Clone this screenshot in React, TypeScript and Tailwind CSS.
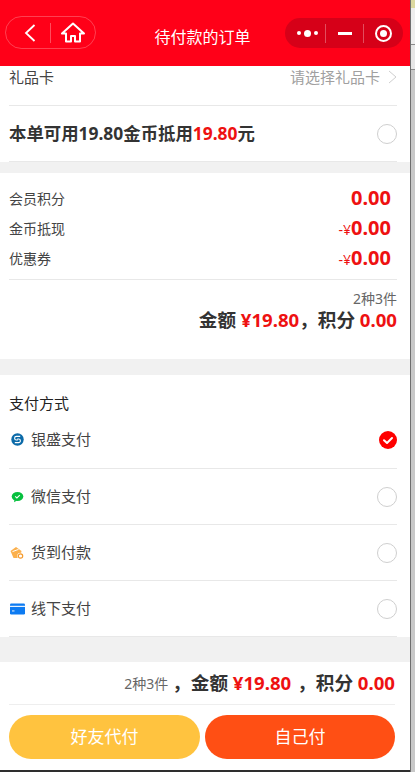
const font = "font-['Noto_Sans','Noto_Sans_CJK_SC',sans-serif]";

function Radio() {
  return <span className="h-5 w-5 shrink-0 rounded-full border border-[#cfcfcf] bg-white" />;
}

function Checked() {
  return (
    <svg width="18" height="18" viewBox="0 0 18 18" className="shrink-0">
      <circle cx="9" cy="9" r="9" fill="#ff0000" />
      <path d="M5 9.2l3 2.8 5-5" fill="none" stroke="#fff" strokeWidth="2" strokeLinecap="round" strokeLinejoin="round" />
    </svg>
  );
}

function UnionIcon() {
  return (
    <svg width="13" height="13" viewBox="0 0 13 13">
      <circle cx="6.5" cy="6.5" r="6.2" fill="#0b6aa8" />
      <path d="M9.2 3.4H5.4a1.8 1.8 0 0 0 0 3.6h1.4M3.8 9.6h3.8a1.8 1.8 0 0 0 0-3.6H6.2" fill="none" stroke="#fff" strokeWidth="1.1" />
    </svg>
  );
}

function WechatIcon() {
  return (
    <svg width="13" height="12" viewBox="0 0 13 12">
      <ellipse cx="6.5" cy="5.5" rx="5.8" ry="4.6" fill="#07c03f" />
      <path d="M3.5 9l-.5 2.2L6 9.6z" fill="#07c03f" />
      <path d="M4.2 5.4l1.7 1.5 2.9-2.7" fill="none" stroke="#fff" strokeWidth="1.1" />
    </svg>
  );
}

function CodIcon() {
  return (
    <svg width="14" height="14" viewBox="0 0 14 14">
      <path d="M0.5 5l5.5-4 5.5 4-1.5 7H3.5z" fill="#fbb04c" />
      <path d="M2.5 5.6l6-2.2" stroke="#fff" strokeWidth="1" />
      <circle cx="10.5" cy="10" r="3.2" fill="#fff" />
      <circle cx="10.5" cy="10" r="2.2" fill="none" stroke="#f59a2c" strokeWidth="1.2" />
    </svg>
  );
}

function CardIcon() {
  return (
    <svg width="15" height="12" viewBox="0 0 15 12">
      <rect width="15" height="11" y="0.5" rx="1.2" fill="#0d7bf2" />
      <rect y="2.8" width="15" height="1.1" fill="#fff" />
      <rect x="2" y="7.5" width="2.5" height="0.9" fill="#fff" />
    </svg>
  );
}

const payments = [
  { icon: <UnionIcon />, label: "银盛支付", checked: true },
  { icon: <WechatIcon />, label: "微信支付" },
  { icon: <CodIcon />, label: "货到付款" },
  { icon: <CardIcon />, label: "线下支付" },
];

const summary = [
  { label: "会员积分", prefix: "", value: "0.00" },
  { label: "金币抵现", prefix: "-¥", value: "0.00" },
  { label: "优惠券", prefix: "-¥", value: "0.00" },
];

export default function App() {
  return (
    <div className={`flex h-[772px] w-[415px] overflow-hidden bg-[#2e2e2e] ${font}`}>
      <div className="flex h-[770px] w-[410px] shrink-0 flex-col bg-[#f1f1f1]">
        {/* nav bar */}
        <div className="flex h-[66px] shrink-0 items-start bg-[#ff0018] pl-[5px] pr-[7px]">
          <div className="mt-4 flex h-[33px] w-[91px] items-center rounded-full border border-white/25">
            <div className="flex w-[44px] justify-center pl-1">
              <svg width="14" height="20" viewBox="0 0 14 20">
                <path d="M11.5 2L3 10l8.5 8" fill="none" stroke="#fff" strokeWidth="1.8" />
              </svg>
            </div>
            <span className="h-5 w-px bg-white/30" />
            <div className="flex flex-1 justify-center">
              <svg width="24" height="21" viewBox="0 0 24 21">
                <path d="M12 1.5L1 11.5h4v8h5v-5.5h4v5.5h5v-8h4z" fill="none" stroke="#fff" strokeWidth="2" strokeLinejoin="round" />
              </svg>
            </div>
          </div>
          <div className="mt-[26px] flex-1 pl-[24px] text-center text-[16px] leading-[22px] text-white">待付款的订单</div>
          <div className="mt-[18px] flex h-[30px] w-[118px] items-center rounded-full bg-[#d60018]">
            <div className="flex w-[40px] items-center justify-center gap-[3px] pl-1">
              <span className="h-[4px] w-[4px] rounded-full bg-white" />
              <span className="h-[7px] w-[7px] rounded-full bg-white" />
              <span className="h-[4px] w-[4px] rounded-full bg-white" />
            </div>
            <span className="h-[19px] w-px bg-white/30" />
            <div className="flex w-[37px] justify-center">
              <span className="h-[3px] w-[14px] bg-white" />
            </div>
            <span className="h-[19px] w-px bg-white/30" />
            <div className="flex flex-1 justify-center">
              <span className="flex h-[17px] w-[17px] items-center justify-center rounded-full border-2 border-white">
                <span className="h-[7px] w-[7px] rounded-full bg-white" />
              </span>
            </div>
          </div>
        </div>

        {/* gift card + coins */}
        <div className="shrink-0 bg-white pl-[9px] pr-[13px]">
          <div className="flex h-[40px] items-start justify-between border-b border-[#e8e8e8] pt-[1px] text-[15px] leading-[20px]">
            <span className="text-[#444]">礼品卡</span>
            <span className="flex items-center gap-[8px] text-[#a0a0a0]">
              请选择礼品卡
              <svg width="9" height="14" viewBox="0 0 9 14">
                <path d="M1 1l7 6-7 6" fill="none" stroke="#cfcfcf" strokeWidth="1" />
              </svg>
            </span>
          </div>
          <div className="flex h-[56px] items-center justify-between border-b border-[#e8e8e8] text-[17.4px] font-bold text-[#333]">
            <span>
              本单可用19.80金币抵用<span className="text-[#ee1111]">19.80</span>元
            </span>
            <Radio />
          </div>
        </div>

        {/* totals */}
        <div className="mt-[11px] h-[186px] shrink-0 bg-white pl-[9px] pr-[13px] pt-[10px]">
          {summary.map((row) => (
            <div key={row.label} className="flex h-[30px] items-center justify-between">
              <span className="text-[14px] text-[#444]">{row.label}</span>
              <span className="mr-[6px] flex items-baseline font-bold text-[#ee1111]">
                {row.prefix && <span className="text-[14px] font-normal">{row.prefix}</span>}
                <span className="text-[20px] leading-[26px]">{row.value}</span>
              </span>
            </div>
          ))}
          <div className="mt-[6px] border-t border-[#e8e8e8] pt-[10px] text-right">
            <div className="text-[14px] leading-[18px] text-[#666]">2种3件</div>
            <div className="text-[18.6px] font-bold leading-[24px] text-[#333]">
              金额 <span className="text-[#ee1111]">¥19.80</span>，积分 <span className="text-[#ee1111]">0.00</span>
            </div>
          </div>
        </div>

        {/* payment */}
        <div className="mt-[16px] shrink-0 bg-white pl-[9px] pr-[13px]">
          <div className="pt-[18px] text-[15px] leading-[20px] text-[#222]">支付方式</div>
          {payments.map((p, i) => (
            <div
              key={p.label}
              className={`flex items-center justify-between border-b border-[#e8e8e8] ${i === 0 ? "h-[56px] pb-[2px]" : "h-[56px]"}`}
            >
              <span className="flex items-center text-[15px] text-[#444]">
                <span className="mr-[6px] flex w-[16px] justify-center">{p.icon}</span>
                {p.label}
              </span>
              {p.checked ? <Checked /> : <Radio />}
            </div>
          ))}
        </div>

        {/* footer */}
        <div className="mt-[25px] flex-1 bg-white pl-[9px] pr-[15px]">
          <div className="flex h-[43px] items-center justify-end border-b border-[#eeeeee] text-[18.6px] font-bold text-[#333]">
            <span className="mr-[4px] text-[14px] font-normal text-[#666]">2种3件</span>
            <span>，</span>
            <span>金额 <span className="text-[#ee1111]">¥19.80</span></span>
            <span className="ml-[6px]">，</span>
            <span>积分 <span className="text-[#ee1111]">0.00</span></span>
          </div>
          <div className="mt-[10px] flex gap-[5px]">
            <button className="h-[44px] w-[191px] rounded-full bg-[#ffc33f] text-[17px] text-white">好友代付</button>
            <button className="h-[44px] flex-1 rounded-full bg-[#ff4f14] text-[17px] text-white">自己付</button>
          </div>
        </div>
      </div>

      {/* sliver of the window behind */}
      <div className="flex h-[772px] w-[5px] shrink-0 flex-col border-l border-[#6e6e6e] bg-[#c8c8c8]">
        <div className="h-[8px] bg-[#dcd9a0]" />
        <div className="h-[37px] border-b border-[#8a8a8a] bg-[#eeeeee]" />
        <div className="h-[25px] border-b border-[#8a8a8a] bg-[#e6e6e6]" />
      </div>
    </div>
  );
}
